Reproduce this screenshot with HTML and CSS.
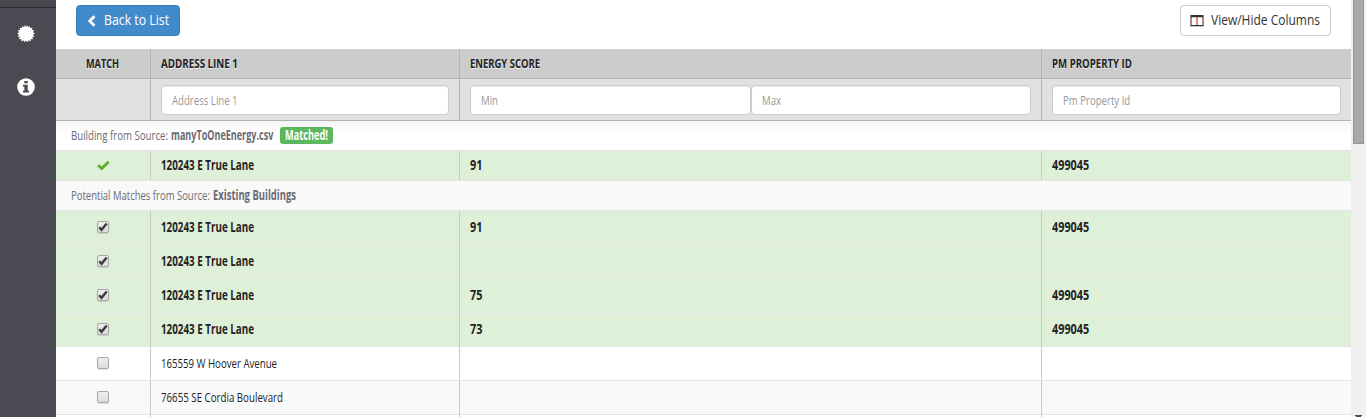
FILE: index.html
```
<!DOCTYPE html>
<html lang="en">
<head>
<meta charset="utf-8">
<title>Building Matching</title>
<link rel="stylesheet" href="styles.css">
</head>
<body>
<div class="app">
  <nav class="sidebar">
    <div class="side-top"></div>
    <svg class="side-icon seal" width="18" height="18" viewBox="0 0 18 18"><path fill="#fff" d="M9 2L10.200.1 11 2.200 13 .9 13.100 3.100 15.400 2.700 14.900 4.900 17.200 5.300 15.900 7.200 17.900 8.500 16 9.800 17.500 11.600 15.300 12.100 16 14.300 13.800 14.100 13.500 16.400 11.600 15.200 10.500 17.300 9 15.600 7.500 17.300 6.400 15.200 4.500 16.400 4.200 14.100 2 14.300 2.700 12.100 .5 11.600 2 9.800 .1 8.500 2.100 7.200 .8 5.300 3.100 4.900 2.600 2.700 4.900 3.100 5 .9 7 2.200 7.800.1z"/></svg>
    <svg class="side-icon info" width="18" height="18" viewBox="0 0 18 18"><circle cx="9" cy="9" r="8.800" fill="#fff"/><path fill="#4a4a52" d="M7.300 2.900h3.400v2.400H7.300zM6 6.800h4.700v5.600H12v2H6v-2h1.400V8.700H6z"/></svg>
  </nav>
  <main class="content">
    <div class="toolbar">
      <button class="btn btn-primary"><svg width="9" height="12" viewBox="0 0 9 12"><path d="M7.500 1.200L2.700 6l4.800 4.800" fill="none" stroke="#fff" stroke-width="2.700"/></svg><span class="t back-label">Back to List</span></button>
      <button class="btn btn-default"><svg width="14" height="12" viewBox="0 0 14 12"><path d="M1 2v8.500M13 2v8.500" fill="none" stroke="#7d4a35" stroke-width="1.300"/><path d="M7 2v8.500" stroke="#c8502c" stroke-width="1.300"/><path fill="#303337" d="M.4 0h13.200v2.300H.4zM.4 10h13.200v1.200H.4z"/></svg><span class="t view-label">View/Hide Columns</span></button>
    </div>
    <div class="row head">
      <div class="cell center"><span class="t match-label">MATCH</span></div>
      <div class="cell"><span class="t address-label">ADDRESS LINE 1</span></div>
      <div class="cell"><span class="t score-label">ENERGY SCORE</span></div>
      <div class="cell"><span class="t pm-label">PM PROPERTY ID</span></div>
    </div>
    <div class="row filters">
      <div class="cell"></div>
      <div class="cell"><div class="field"><span class="t">Address Line 1</span></div></div>
      <div class="cell"><div class="field"><span class="t">Min</span></div><div class="field"><span class="t">Max</span></div></div>
      <div class="cell"><div class="field"><span class="t">Pm Property Id</span></div></div>
    </div>
    <div class="source first"><span class="t building-source">Building from Source:</span><b class="t file-name">manyToOneEnergy.csv</b><span class="badge"><span class="t">Matched!</span></span></div>
    <div class="row data matched summary">
      <div class="cell center"><svg class="tick" width="13" height="11" viewBox="0 0 13 11"><path d="M1.200 5.200l3.500 3.400 7-6.800" fill="none" stroke="#5cb02c" stroke-width="2.900"/></svg></div>
      <div class="cell"><span class="t">120243 E True Lane</span></div><div class="cell"><span class="t num">91</span></div><div class="cell"><span class="t num">499045</span></div>
    </div>
    <div class="source second"><span class="t potential-source">Potential Matches from Source:</span><b class="t existing">Existing Buildings</b></div>
    <div class="row data matched">
      <div class="cell center"><span class="check"><svg width="10" height="10" viewBox="0 0 10 10"><path d="M1.200 5.200l2.300 2.600L8.700 1.500" fill="none" stroke="#3c3c3c" stroke-width="2.400"/></svg></span></div>
      <div class="cell"><span class="t">120243 E True Lane</span></div><div class="cell"><span class="t num">91</span></div><div class="cell"><span class="t num">499045</span></div>
    </div>
    <div class="row data matched">
      <div class="cell center"><span class="check"><svg width="10" height="10" viewBox="0 0 10 10"><path d="M1.200 5.200l2.300 2.600L8.700 1.500" fill="none" stroke="#3c3c3c" stroke-width="2.400"/></svg></span></div>
      <div class="cell"><span class="t">120243 E True Lane</span></div><div class="cell"></div><div class="cell"></div>
    </div>
    <div class="row data matched">
      <div class="cell center"><span class="check"><svg width="10" height="10" viewBox="0 0 10 10"><path d="M1.200 5.200l2.300 2.600L8.700 1.500" fill="none" stroke="#3c3c3c" stroke-width="2.400"/></svg></span></div>
      <div class="cell"><span class="t">120243 E True Lane</span></div><div class="cell"><span class="t num">75</span></div><div class="cell"><span class="t num">499045</span></div>
    </div>
    <div class="row data matched">
      <div class="cell center"><span class="check"><svg width="10" height="10" viewBox="0 0 10 10"><path d="M1.200 5.200l2.300 2.600L8.700 1.500" fill="none" stroke="#3c3c3c" stroke-width="2.400"/></svg></span></div>
      <div class="cell"><span class="t">120243 E True Lane</span></div><div class="cell"><span class="t num">73</span></div><div class="cell"><span class="t num">499045</span></div>
    </div>
    <div class="row data">
      <div class="cell center"><span class="check"></span></div>
      <div class="cell"><span class="t hoover">165559 W Hoover Avenue</span></div><div class="cell"></div><div class="cell"></div>
    </div>
    <div class="row data alt">
      <div class="cell center"><span class="check"></span></div>
      <div class="cell"><span class="t">76655 SE Cordia Boulevard</span></div><div class="cell"></div><div class="cell"></div>
    </div>
    <div class="row data"><div class="cell"></div><div class="cell"></div><div class="cell"></div><div class="cell"></div></div>
  </main>
  <div class="scrollbar"><div class="thumb"></div><svg width="7" height="2" viewBox="0 0 7 2"><path d="M0 0h7v1H6v1H1V1H0z" fill="#505050"/></svg></div>
</div>
</body>
</html>
```
FILE: styles.css
```
* { box-sizing: border-box; }
body { margin: 0; overflow: hidden; font-family: "Open Sans", sans-serif; font-size: 13.5px; color: #222; }
.app { display: flex; height: 417px; overflow: hidden; background: #fff; }

/* condensed text: each label keeps its natural box and is squeezed from the left */
.t { display: inline-block; flex: none; white-space: nowrap; line-height: 18px; transform: scaleX(var(--squeeze, .72)); transform-origin: left center; }

.sidebar { width: 56px; flex: none; background: #4a4a52; display: flex; flex-direction: column; align-items: center; padding-right: 4px; }
.side-top { width: 56px; margin-right: -4px; height: 8px; flex: none; background: #484850; border-bottom: 1px solid #2c2c30; }
.seal { margin-top: 17px; }
.info { margin-top: 35px; }
.side-icon { flex: none; }

.content { width: 1295px; flex: none; }
.toolbar { height: 49px; padding: 5px 20px 0; display: flex; justify-content: space-between; align-items: flex-start; }
.btn { display: flex; align-items: center; height: 31px; border-radius: 4px; padding: 0 0 1px; font: 14px "Open Sans", sans-serif; overflow: hidden; }
.btn svg { flex: none; margin-top: 1px; }
.btn-primary { width: 104px; padding-left: 10px; gap: 8px; background: #428bca; border: 1px solid #357ebd; color: #fff; }
.btn-default { width: 151px; padding-left: 9px; gap: 7px; background: #fff; border: 1px solid #ccc; color: #333; }
.back-label { --squeeze: .878; }
.view-label { --squeeze: .857; }

.row { display: grid; grid-template-columns: 95px 309px 582px 309px; }
.cell { display: flex; align-items: center; padding: 0 10px; min-width: 0; border-right: 1px solid #c8c8c8; }
.cell:last-child { border-right: 0; }
.center { justify-content: center; }

.head { height: 30px; background: #ccc; border-bottom: 1px solid #b3b3b3; font-size: 13px; font-weight: 700; text-shadow: 0 1px 0 rgba(255, 255, 255, .7); }
.head .cell { padding-bottom: 2px; }
.head .cell, .filters .cell { border-color: #b3b3b3; }
.match-label { --squeeze: .702; width: 34px; }
.address-label { --squeeze: .754; }
.score-label { --squeeze: .727; }
.pm-label { --squeeze: .741; }

.filters { height: 42px; background: #e1e1e1; border-bottom: 1px solid #b3b3b3; }
.field { flex: 1; height: 30px; display: flex; align-items: center; min-width: 0; margin-top: 1px; padding: 0 0 1px 10px; background: #fff; border: 1px solid #ccc; border-radius: 4px; box-shadow: inset 0 1px 1px rgba(0, 0, 0, .075); color: #999; font-size: 13px; --squeeze: .74; }

.source { display: flex; align-items: center; padding: 0 0 1px 15px; height: 30px; border-bottom: 1px solid #e2e4e4; color: #6a6a72; }
.first { background: linear-gradient(#f5f5f5, #fff 12px); }
.second { background: #f9f9f9; }
.building-source { --squeeze: .7145; width: 99.5px; }
.file-name { --squeeze: .67; width: 109.5px; }
.badge { width: 53px; height: 17px; display: flex; align-items: center; padding-left: 5px; border-radius: 3px; background: #5cb85c; color: #fff; font-weight: 700; --squeeze: .683; }
.potential-source { --squeeze: .704; width: 142px; }
.existing { --squeeze: .702; }

.data { height: 34px; background: #fff; border-bottom: 1px solid #e4e4e4; }
.data .cell { padding-bottom: 2px; }
.matched { background: #dff0d8; font-weight: 700; --squeeze: .728; }
.summary { height: 30px; }
.tick { margin-top: 2px; }
.alt { background: #f9f9f9; }
.num { --squeeze: .804; }
.hoover { --squeeze: .7145; }

.check { display: flex; align-items: center; justify-content: center; width: 12px; height: 12px; border: 1px solid #a8a8a8; border-radius: 2px; background: linear-gradient(#ededed, #dcdcdc); box-shadow: 0 1px 1px rgba(0, 0, 0, .12); }
.check svg { flex: none; }

.scrollbar { width: 15px; flex: none; display: flex; flex-direction: column; justify-content: space-between; align-items: center; background: #f0f0f0; }
.thumb { width: 11px; height: 144px; background: #a8a8a8; border: 1px solid #959595; border-top: 0; }
```
